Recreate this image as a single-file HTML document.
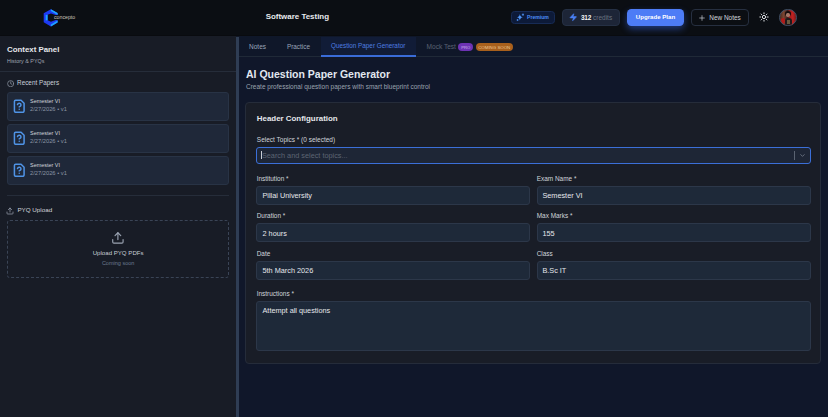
<!DOCTYPE html>
<html><head><meta charset="utf-8">
<style>
*{box-sizing:border-box;margin:0;padding:0}
html,body{width:828px;height:417px;overflow:hidden;background:#111827;font-family:"Liberation Sans",sans-serif}
.a{position:absolute;white-space:nowrap}
.t{line-height:1}
</style></head><body>
<div class="a" style="left:0px;top:0px;width:828px;height:36px;background:#0b0e13"></div>
<div class="a" style="left:0px;top:35px;width:828px;height:1px;background:#090b0f"></div>
<div class="a" style="left:0px;top:36px;width:236px;height:381px;background:#181c26"></div>
<div class="a" style="left:236px;top:36.5px;width:3px;height:380.5px;background:#2f3d54"></div>
<div class="a" style="left:239px;top:36px;width:589px;height:381px;background:#10172a"></div>
<svg class="a" style="left:43px;top:9px" width="15" height="18" viewBox="43 9 15 18">
<polygon fill="#1d3af2" points="50.9,9.2 57.6,13.0 57.6,14.9 55.6,14.9 51,13.4 47.6,14.8 47.6,20.3 51,21.7 55.6,19.9 57.6,19.9 57.6,22.4 50.9,26.5 43.7,22.3 43.7,13.3"/>
<polygon fill="#1ea6ff" points="50.9,9.2 57.6,13.0 57.6,14.9 50.9,11.1"/>
<polygon fill="#1ea6ff" points="45.7,15.1 47.6,14.8 47.6,20.3 45.7,20.4"/>
<polygon fill="#1ea6ff" points="50.9,26.5 57.6,22.4 57.6,20.5 50.9,24.5"/>
</svg>
<div class="a t" style="left:54px;top:15.00px;font-size:5.22px;letter-spacing:0.002px;font-weight:400;color:#cbc3bb;">concepto</div>
<div class="a t" style="left:265.7px;top:13.10px;font-size:7.94px;letter-spacing:0.001px;font-weight:700;color:#e8eaee;">Software Testing</div>
<div class="a" style="left:511px;top:11px;width:44px;height:13px;border-radius:3.5px;background:#0d1a38;border:1px solid #172b55"></div>
<svg class="a" style="left:515.8px;top:13.3px" width="8.4" height="8.4" viewBox="0 0 24 24"><path fill="#4f94f5" d="M11 3 C11.9 9.3 14.3 11.4 20 12.4 C14.3 13.4 11.9 15.5 11 21.8 C10.1 15.5 7.7 13.4 2 12.4 C7.7 11.4 10.1 9.3 11 3Z"/><path stroke="#4f94f5" stroke-width="2.4" stroke-linecap="round" d="M20 2.5v4.5M17.8 4.8h4.5M4.5 18.5v3M3 20h3"/></svg>
<div class="a t" style="left:527px;top:14.60px;font-size:5.12px;letter-spacing:-0.002px;font-weight:700;color:#4f8ff7;">Premium</div>
<div class="a" style="left:561.5px;top:9px;width:58.5px;height:16.6px;border-radius:4px;background:#1d2537;border:1px solid #253044"></div>
<svg class="a" style="left:569px;top:13.3px" width="8.5" height="8.5" viewBox="0 0 24 24"><path fill="#4a80f5" stroke="#4a80f5" stroke-width="1.5" stroke-linejoin="round" d="M4 14a1 1 0 0 1-.78-1.63l9.9-10.2a.5.5 0 0 1 .86.46l-1.92 6.02A1 1 0 0 0 13 10h7a1 1 0 0 1 .78 1.63l-9.9 10.2a.5.5 0 0 1-.86-.46l1.92-6.02A1 1 0 0 0 11 14z"/></svg>
<div class="a t" style="left:581px;top:15.00px;font-size:6.5px;letter-spacing:0.000px;font-weight:700;color:#f3f4f6;letter-spacing:-0.25px">312</div>
<div class="a t" style="left:593.1px;top:15.00px;font-size:6.48px;letter-spacing:0.002px;font-weight:400;color:#6b7280;">credits</div>
<div class="a" style="left:626.7px;top:9px;width:57.3px;height:17.2px;border-radius:4.5px;background:#4d7cf6;box-shadow:0 3px 7px rgba(59,110,246,0.45)"></div>
<div class="a t" style="left:635.8px;top:13.80px;font-size:6.11px;letter-spacing:0.001px;font-weight:700;color:#ffffff;">Upgrade Plan</div>
<div class="a" style="left:690.5px;top:9px;width:58.3px;height:17px;border-radius:4px;border:1px solid #262f40"></div>
<svg class="a" style="left:698px;top:13.5px" width="8" height="8" viewBox="0 0 24 24" fill="none" stroke="#cfd4dc" stroke-width="2" stroke-linecap="round" stroke-linejoin="round"><path d="M5 12h14"/><path d="M12 5v14"/></svg>
<div class="a t" style="left:709.3px;top:15.00px;font-size:6.44px;letter-spacing:0.001px;font-weight:400;color:#d1d5db;">New Notes</div>
<svg class="a" style="left:758.8px;top:12.35px" width="10" height="10" viewBox="0 0 24 24" fill="none" stroke="#e5e7eb" stroke-width="2.3" stroke-linecap="round" stroke-linejoin="round"><circle cx="12" cy="12" r="4"/><path d="M12 2v2"/><path d="M12 20v2"/><path d="m4.93 4.93 1.41 1.41"/><path d="m17.66 17.66 1.41 1.41"/><path d="M2 12h2"/><path d="M20 12h2"/><path d="m6.34 17.66-1.41 1.41"/><path d="m19.07 4.93-1.41 1.41"/></svg>
<div class="a" style="left:779.4px;top:8.6px;width:17.2px;height:17.2px;border-radius:50%;border:1.2px solid #44536a;overflow:hidden;background:linear-gradient(90deg,#4a2a20 0%,#7a4430 22%,#3a2020 48%,#9a1a1a 60%,#c02222 80%,#7a1818 100%)">
<div style="position:absolute;left:0.5px;top:8.5px;width:4.5px;height:5.5px;border-radius:2px;background:#b01c1c"></div>
<div style="position:absolute;left:4.8px;top:1.2px;width:6px;height:5.5px;border-radius:50% 50% 35% 35%;background:#140c0c"></div>
<div style="position:absolute;left:6px;top:3.8px;width:3.6px;height:4px;border-radius:45%;background:#a87868"></div>
<div style="position:absolute;left:4.5px;top:8.5px;width:7.5px;height:9px;border-radius:3px 3px 0 0;background:#201a1c"></div>
<div style="position:absolute;left:6.3px;top:10.5px;width:3px;height:3.5px;background:#6a5a40"></div>
</div>
<div class="a t" style="left:7px;top:46.30px;font-size:7.86px;letter-spacing:-0.001px;font-weight:700;color:#e5e7eb;">Context Panel</div>
<div class="a t" style="left:7px;top:58.70px;font-size:5.38px;letter-spacing:0.002px;font-weight:400;color:#a0a7b3;">History &amp; PYQs</div>
<div class="a" style="left:0px;top:71px;width:236px;height:1px;background:#262d3a"></div>
<svg class="a" style="left:6.8px;top:79.5px" width="7.4" height="7.4" viewBox="0 0 24 24" fill="none" stroke="#8f98a6" stroke-width="2.3" stroke-linecap="round" stroke-linejoin="round"><circle cx="12" cy="12" r="10"/><polyline points="12 6 12 12 16 14"/></svg>
<div class="a t" style="left:17.1px;top:79.50px;font-size:6.35px;letter-spacing:-0.000px;font-weight:400;color:#c8ced8;">Recent Papers</div>
<div class="a" style="left:7px;top:92px;width:222px;height:29px;border-radius:3px;background:#1f2839;border:1px solid #283345"></div>
<svg class="a" style="left:12.3px;top:98.7px" width="14.5" height="14.5" viewBox="0 0 24 24" fill="none" stroke="#4f93e6" stroke-width="2.5" stroke-linecap="round" stroke-linejoin="round"><path d="M12 17h.01"/><path d="M15 2H6a2 2 0 0 0-2 2v16a2 2 0 0 0 2 2h12a2 2 0 0 0 2-2V7z"/><path d="M9.1 9a3 3 0 0 1 5.82 1c0 2-3 3-3 3"/></svg>
<div class="a t" style="left:30px;top:98.50px;font-size:5.45px;letter-spacing:0.001px;font-weight:400;color:#d1d5db;">Semester VI</div>
<div class="a t" style="left:30px;top:107.00px;font-size:5.76px;letter-spacing:-0.002px;font-weight:400;color:#8b95a5;">2/27/2026 • v1</div>
<div class="a" style="left:7px;top:124px;width:222px;height:29px;border-radius:3px;background:#1f2839;border:1px solid #283345"></div>
<svg class="a" style="left:12.3px;top:130.7px" width="14.5" height="14.5" viewBox="0 0 24 24" fill="none" stroke="#4f93e6" stroke-width="2.5" stroke-linecap="round" stroke-linejoin="round"><path d="M12 17h.01"/><path d="M15 2H6a2 2 0 0 0-2 2v16a2 2 0 0 0 2 2h12a2 2 0 0 0 2-2V7z"/><path d="M9.1 9a3 3 0 0 1 5.82 1c0 2-3 3-3 3"/></svg>
<div class="a t" style="left:30px;top:130.50px;font-size:5.45px;letter-spacing:0.001px;font-weight:400;color:#d1d5db;">Semester VI</div>
<div class="a t" style="left:30px;top:139.00px;font-size:5.76px;letter-spacing:-0.002px;font-weight:400;color:#8b95a5;">2/27/2026 • v1</div>
<div class="a" style="left:7px;top:156px;width:222px;height:29px;border-radius:3px;background:#1f2839;border:1px solid #283345"></div>
<svg class="a" style="left:12.3px;top:162.7px" width="14.5" height="14.5" viewBox="0 0 24 24" fill="none" stroke="#4f93e6" stroke-width="2.5" stroke-linecap="round" stroke-linejoin="round"><path d="M12 17h.01"/><path d="M15 2H6a2 2 0 0 0-2 2v16a2 2 0 0 0 2 2h12a2 2 0 0 0 2-2V7z"/><path d="M9.1 9a3 3 0 0 1 5.82 1c0 2-3 3-3 3"/></svg>
<div class="a t" style="left:30px;top:162.50px;font-size:5.45px;letter-spacing:0.001px;font-weight:400;color:#d1d5db;">Semester VI</div>
<div class="a t" style="left:30px;top:171.00px;font-size:5.76px;letter-spacing:-0.002px;font-weight:400;color:#8b95a5;">2/27/2026 • v1</div>
<div class="a" style="left:7px;top:195px;width:222px;height:1px;background:#262d3a"></div>
<svg class="a" style="left:6.3px;top:206.5px" width="8" height="8" viewBox="0 0 24 24" fill="none" stroke="#9aa2af" stroke-width="2.2" stroke-linecap="round" stroke-linejoin="round"><path d="M21 15v4a2 2 0 0 1-2 2H5a2 2 0 0 1-2-2v-4"/><polyline points="17 8 12 3 7 8"/><line x1="12" x2="12" y1="3" y2="15"/></svg>
<div class="a t" style="left:17.4px;top:206.90px;font-size:6.26px;letter-spacing:0.000px;font-weight:400;color:#d1d5db;">PYQ Upload</div>
<div class="a" style="left:7px;top:220px;width:222px;height:58px;border-radius:3px;border:1px dashed #3a4456"></div>
<svg class="a" style="left:111.2px;top:231.1px" width="13.8" height="13.8" viewBox="0 0 24 24" fill="none" stroke="#9aa3b1" stroke-width="2" stroke-linecap="round" stroke-linejoin="round"><path d="M21 15v4a2 2 0 0 1-2 2H5a2 2 0 0 1-2-2v-4"/><polyline points="17 8 12 3 7 8"/><line x1="12" x2="12" y1="3" y2="15"/></svg>
<div class="a t" style="left:92.7px;top:250.30px;font-size:6.11px;letter-spacing:-0.003px;font-weight:400;color:#c5cbd5;">Upload PYQ PDFs</div>
<div class="a t" style="left:101.9px;top:260.60px;font-size:5.52px;letter-spacing:-0.002px;font-weight:400;color:#6b7a90;">Coming soon</div>
<div class="a" style="left:239px;top:36px;width:589px;height:20px;background:#0f1729"></div>
<div class="a" style="left:239px;top:56px;width:589px;height:1px;background:#1f2937"></div>
<div class="a t" style="left:249.1px;top:43.70px;font-size:6.47px;letter-spacing:-0.000px;font-weight:400;color:#9aa5b8;">Notes</div>
<div class="a t" style="left:286.9px;top:43.70px;font-size:6.42px;letter-spacing:0.001px;font-weight:400;color:#9aa5b8;">Practice</div>
<div class="a" style="left:321px;top:36.5px;width:95px;height:18.5px;background:#111c37"></div>
<div class="a" style="left:321px;top:55px;width:95px;height:2px;background:#3a6cd8"></div>
<div class="a t" style="left:331px;top:43.20px;font-size:6.33px;letter-spacing:0.002px;font-weight:400;color:#4f7fe0;">Question Paper Generator</div>
<div class="a t" style="left:426.6px;top:43.90px;font-size:6.56px;letter-spacing:-0.001px;font-weight:400;color:#5a6272;">Mock Test</div>
<div class="a" style="left:458.3px;top:43px;width:14.7px;height:7.9px;border-radius:4px;background:#6d33b3"></div>
<div class="a t" style="left:461.2px;top:45.80px;font-size:4.15px;letter-spacing:0.003px;font-weight:400;color:#d0b8ec;">PRO</div>
<div class="a" style="left:475.7px;top:43px;width:37.3px;height:7.9px;border-radius:4px;background:#a8601c"></div>
<div class="a t" style="left:478.2px;top:45.80px;font-size:4.39px;letter-spacing:0.001px;font-weight:400;color:#ecc898;">COMING SOON</div>
<div class="a t" style="left:246px;top:69.10px;font-size:10.51px;letter-spacing:-0.002px;font-weight:700;color:#e2e8f0;">AI Question Paper Generator</div>
<div class="a t" style="left:246px;top:83.50px;font-size:6.5px;letter-spacing:0.002px;font-weight:400;color:#9ca3af;">Create professional question papers with smart blueprint control</div>
<div class="a" style="left:245px;top:102px;width:576px;height:262px;border-radius:4px;background:#191d27;border:1px solid #252c3a"></div>
<div class="a t" style="left:256.8px;top:114.90px;font-size:7.91px;letter-spacing:0.002px;font-weight:700;color:#e5e7eb;">Header Configuration</div>
<div class="a t" style="left:256.8px;top:137.30px;font-size:6.5px;letter-spacing:0.000px;font-weight:400;color:#d1d5db;">Select Topics * (0 selected)</div>
<div class="a" style="left:256px;top:147px;width:555px;height:17px;border-radius:3px;background:#1e2636;border:1px solid #3b6fd8"></div>
<div class="a" style="left:261px;top:150.5px;width:0.8px;height:8px;background:#c9ced6"></div>
<div class="a t" style="left:261.9px;top:152.30px;font-size:7.32px;letter-spacing:-0.002px;font-weight:400;color:#5d6573;">Search and select topics...</div>
<div class="a" style="left:794px;top:151px;width:1px;height:9px;background:#5a6372"></div>
<svg class="a" style="left:798.5px;top:152px" width="7" height="7" viewBox="0 0 24 24" fill="none" stroke="#8a93a3" stroke-width="2.2" stroke-linecap="round" stroke-linejoin="round"><path d="m6 9 6 6 6-6"/></svg>
<div class="a t" style="left:256.7px;top:175.70px;font-size:6.45px;letter-spacing:0.000px;font-weight:400;color:#d1d5db;">Institution *</div>
<div class="a" style="left:256px;top:186px;width:274px;height:19px;border-radius:3px;background:#1e2939;border:1px solid #2c3749"></div>
<div class="a t" style="left:262.5px;top:191.50px;font-size:7.3px;letter-spacing:0.000px;font-weight:400;color:#e5e7eb;">Pillai University</div>
<div class="a t" style="left:536.7px;top:175.70px;font-size:6.45px;letter-spacing:0.000px;font-weight:400;color:#d1d5db;">Exam Name *</div>
<div class="a" style="left:536.5px;top:186px;width:274.5px;height:19px;border-radius:3px;background:#1e2939;border:1px solid #2c3749"></div>
<div class="a t" style="left:542.4px;top:191.50px;font-size:7.3px;letter-spacing:0.000px;font-weight:400;color:#e5e7eb;">Semester VI</div>
<div class="a t" style="left:256.7px;top:213.20px;font-size:6.45px;letter-spacing:0.000px;font-weight:400;color:#d1d5db;">Duration *</div>
<div class="a" style="left:256px;top:223px;width:274px;height:19px;border-radius:3px;background:#1e2939;border:1px solid #2c3749"></div>
<div class="a t" style="left:262.5px;top:229.50px;font-size:7.3px;letter-spacing:0.000px;font-weight:400;color:#e5e7eb;">2 hours</div>
<div class="a t" style="left:536.7px;top:213.20px;font-size:6.45px;letter-spacing:0.000px;font-weight:400;color:#d1d5db;">Max Marks *</div>
<div class="a" style="left:536.5px;top:223px;width:274.5px;height:19px;border-radius:3px;background:#1e2939;border:1px solid #2c3749"></div>
<div class="a t" style="left:542.4px;top:229.50px;font-size:7.3px;letter-spacing:0.000px;font-weight:400;color:#e5e7eb;">155</div>
<div class="a t" style="left:256.7px;top:250.50px;font-size:6.45px;letter-spacing:0.000px;font-weight:400;color:#d1d5db;">Date</div>
<div class="a" style="left:256px;top:261px;width:274px;height:19px;border-radius:3px;background:#1e2939;border:1px solid #2c3749"></div>
<div class="a t" style="left:262.5px;top:266.50px;font-size:7.3px;letter-spacing:0.000px;font-weight:400;color:#e5e7eb;">5th March 2026</div>
<div class="a t" style="left:536.7px;top:250.50px;font-size:6.45px;letter-spacing:0.000px;font-weight:400;color:#d1d5db;">Class</div>
<div class="a" style="left:536.5px;top:261px;width:274.5px;height:19px;border-radius:3px;background:#1e2939;border:1px solid #2c3749"></div>
<div class="a t" style="left:542.4px;top:266.50px;font-size:7.3px;letter-spacing:0.000px;font-weight:400;color:#e5e7eb;">B.Sc IT</div>
<div class="a t" style="left:256.7px;top:291.00px;font-size:6.45px;letter-spacing:0.000px;font-weight:400;color:#d1d5db;">Instructions *</div>
<div class="a" style="left:256px;top:301.2px;width:555px;height:49.7px;border-radius:3px;background:#1e2939;border:1px solid #2c3749"></div>
<div class="a t" style="left:262.5px;top:306.80px;font-size:7.3px;letter-spacing:0.000px;font-weight:400;color:#e5e7eb;">Attempt all questions</div>
</body></html>
